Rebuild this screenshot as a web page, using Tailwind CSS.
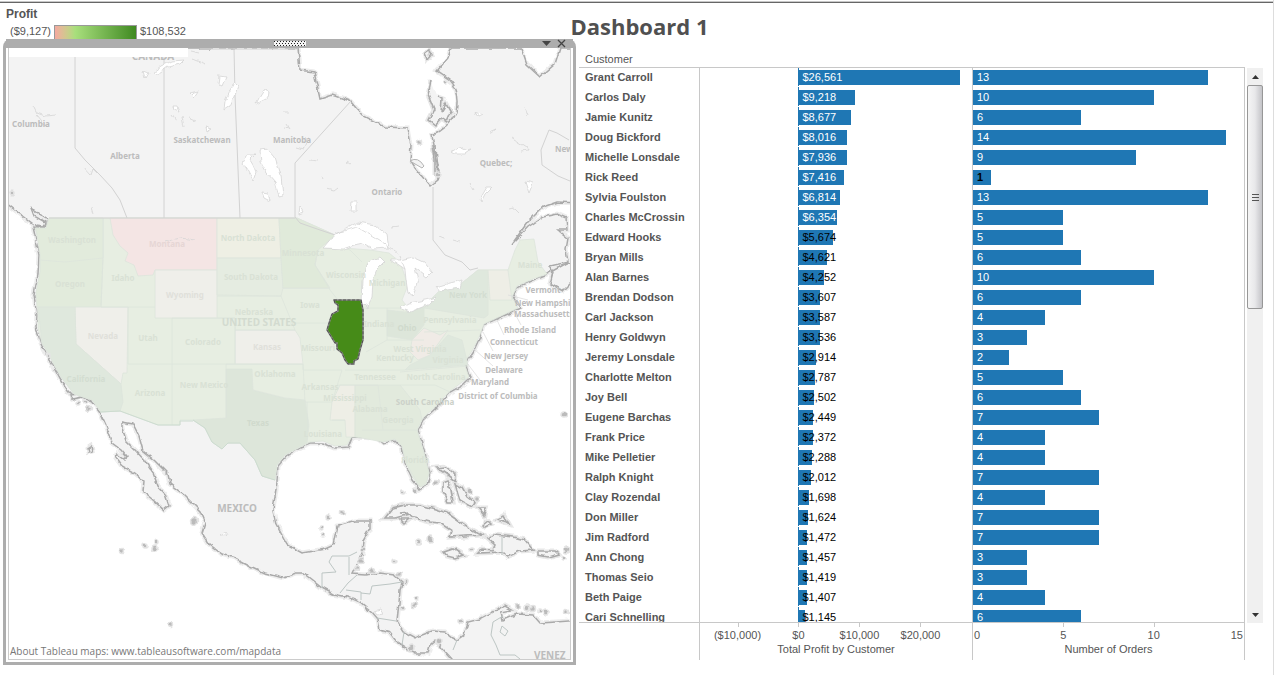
<!DOCTYPE html>
<html lang="en">
<head>
<meta charset="utf-8">
<meta name="viewport" content="width=device-width, initial-scale=1">
<title>Dashboard 1</title>
<script src="https://cdn.jsdelivr.net/npm/@tailwindcss/browser@4"></script>
</head>
<body class="bg-white font-['Liberation_Sans',Arial,sans-serif] text-[11px] leading-4 text-[#555]">
<div class="flex h-screen min-h-96 flex-col border-r border-r-[#ddd]">
  <div class="mt-px h-[2px] shrink-0 border-b border-b-[#666] bg-[#c8c8c8]"></div>

  <header class="grid h-9 shrink-0 grid-cols-[1fr_auto_1fr] pl-[6px]">
    <section aria-label="Profit legend">
      <h2 class="pt-[3px] text-xs leading-4 font-bold">Profit</h2>
      <div class="flex gap-[3px] pl-1">
        <span class="pt-px">($9,127)</span>
        <span class="mt-[3px] h-[14px] w-[83px] border border-b-0 border-[#999] bg-linear-to-r from-[#f4a9a0] via-[#a8df7c] via-25% to-[#3f8a1f]"></span>
        <span class="pt-px">$108,532</span>
      </div>
    </section>
    <h1 class="pt-2 font-['Trebuchet_MS','Open_Sans',sans-serif] text-[22px] leading-[30px] font-bold text-[#505050]">Dashboard 1</h1>
  </header>

  <main class="grid min-h-0 flex-1 grid-cols-[573fr_684fr] gap-[3px] pr-[10px] pb-[10px] pl-[3px]">
    <section aria-label="Profit map" class="flex min-h-0 min-w-0 flex-col rounded-t-lg border-x-[3px] border-b-[3px] border-[#adadad] bg-white">
      <div class="grid h-[9px] shrink-0 grid-cols-[1fr_auto_1fr] items-center bg-[#adadad]">
        <span></span>
        <svg class="h-[5px] w-8" viewBox="0 0 32 5" aria-hidden="true"><defs><pattern id="grip" width="3" height="4" patternUnits="userSpaceOnUse"><rect width="3" height="4" fill="#f4f4f4"/><rect width="1" height="1" fill="#222"/><rect x="2" y="2" width="1" height="1" fill="#222"/></pattern></defs><rect width="32" height="5" fill="url(#grip)"/></svg>
        <div class="flex items-center justify-end gap-[6px] pr-[7px]">
          <button type="button" aria-label="Map menu"><svg class="block h-[9px] w-[9px]" viewBox="0 0 9 9"><path d="M0 2H9L4.500 7Z" fill="#444"/></svg></button>
          <button type="button" aria-label="Close map"><svg class="block h-[9px] w-[9px]" viewBox="0 0 9 9"><path d="M1 1L8 8M8 1L1 8" stroke="#444" stroke-width="1.300"/></svg></button>
        </div>
      </div>
      <div class="mx-[2px] mb-[2px] min-h-0 flex-1 border-x border-b border-[#ccc]">
<svg class="block h-full w-full font-['Noto_Sans','Open_Sans',sans-serif]" viewBox="9 48 561 611" preserveAspectRatio="xMidYMid slice" role="img" aria-label="Map of North America with Illinois highlighted">
<defs>
<filter id="rough" x="-5%" y="-5%" width="110%" height="110%"><feTurbulence type="fractalNoise" baseFrequency="0.13" numOctaves="2" seed="4"/><feDisplacementMap in="SourceGraphic" scale="5" xChannelSelector="R" yChannelSelector="G"/><feGaussianBlur stdDeviation="0.35"/></filter>
<path id="land" d="M0 48H298L300 70L314 72L320 99L333 95L350 101L362 115L385 127L408 128L411 145L410 160L415 168L430 186L438 180L440 175L436 155L432 135Q450 128 457 112Q461 92 450 80L437 71L448 58L451 48H521L527 65L540 77L555 64L560 48H580V203L557 202L543 207L527 223L512 244L528 227L543 217L557 214L566 218L567 230L558 230L568 238L566 250L568 262L550 266L553 272L550 284L563 291L576 278L580 262L567 263L547 274L533 280L517 287L513 297L520 308L510 313L483 325L480 337L473 352L465 363L470 378L463 385L450 392L437 407L423 420L418 430L425 453L430 473L427 485L420 489L413 480L405 463L402 447L395 440L383 443L377 438L352 437L348 447L335 448L323 443L310 443L300 447L285 457L278 465L277 482L273 510L276 525L287 545L302 553L325 549L334 545L338 526L355 521L370 521L370 528L363 540L362 553L358 562L352 574L365 575L380 573L394 575L402 582L400 590L399 603L397 621L404 632L415 638L432 631L445 632L453 638L457 640L464 635L468 622L480 619L495 611L505 606L512 610L501 612L503 620L517 614L533 615L540 623L556 622L580 620V670H460L452 659L442 648L436 640L430 645L428 653L415 653L410 650L396 641L390 633L380 630L378 619L372 612L360 602L348 597L333 594L322 588L312 580L303 573L297 573L283 578L265 573L250 566L235 558L222 554L209 544L202 533L205 523L200 511L184 495L170 484L168 474L155 461L143 451L139 436L133 424L122 422L122 428L126 441L136 451L144 460L153 473L158 486L165 494L169 506L164 510L153 500L143 492L144 481L135 473L122 466L116 458L117 454L124 459L127 457L120 449L112 443L111 439L106 425L100 412L92 401L82 397L72 395L68 391L60 378L54 367L47 355L41 343L36 328L37 315L34 295L38 275L39 255L36 240L33 227L45 228L49 220L42 216L38 212L32 208L35 216L46 222L44 227L36 226L20 214L6 203H0Z"/>
<path id="isles" d="M385 518L393 508L405 505H420L435 509L447 513L467 527L482 535L465 536L450 537L452 531L440 523L430 522L415 518L408 512L400 513L410 514L395 518ZM487 538L495 535L513 537L525 540L533 550L520 551L507 557L502 552L478 553L482 549L493 550L495 545ZM444 552L453 549L463 555L455 558L447 556ZM538 551H555L558 554L548 557L538 555ZM400 519L409 519L404 523ZM485 527L491 524L488 521L483 525ZM437 468L446 467L456 475L455 481L446 474ZM443 482L448 480L451 490L453 502L448 502L443 492ZM455 484L462 488L467 497L475 503L472 507L460 500ZM478 508L486 508L484 515ZM497 520L504 516L508 523ZM88 448L91 446L92 451L89 452ZM70 395L80 394L82 397L73 399ZM425 54L429 51L431 54L427 59ZM431 80L428 95L434 110L429 120L435 125L441 118L447 122L451 113L446 104L441 112L442 98L437 96M433 145L435 160V175M436 146L438 180"/>
</defs>
<rect width="580" height="670" fill="#fff"/>
<g filter="url(#rough)">
<use href="#land" fill="none" stroke="#ededed" stroke-width="5"/><use href="#isles" fill="none" stroke="#e8e8e8" stroke-width="5"/>
<use href="#land" fill="#f3f3f3" stroke="#aaa" stroke-width="1.500"/><use href="#isles" fill="#f3f3f3" stroke="#aaa" stroke-width="1.600"/>
</g>
<!-- Contiguous states: a common tint, then the states that differ from it -->
<g stroke="#dde4dc" stroke-width=".8">
<path fill="#e7eee2" d="M49 218H297L335 235L324 248L343 248L370 250L389 253L400 262L408 285L402 300L410 310L437 299L462 283L478 270H508L515 250L520 240L534 239L538 262L547 274L533 279L517 286L512 297L518 308L484 324L479 337L472 351L464 363L469 377L450 391L436 406L422 419L417 430L424 453L429 473L426 484L420 487L413 478L406 463L402 446L395 439L383 442L377 437L352 436L347 445L335 446L323 441L310 442L285 455L277 465L275 480L262 476L255 460L240 443L228 443L222 449L212 442L205 428L193 420H180V425H158L120 411L101 412L92 400L74 394L61 377L49 355L42 343L38 328L38 315L36 295L40 275L41 255L38 240L35 228L46 229Z"/>
<path fill="#e2ebdc" d="M103 218V258L101 307H37L36 292L40 272L40 255L36 228L46 228L49 218Z"/>
<path fill="#f4e5e4" d="M110 218H217V270H155L153 275L138 276L134 265L125 261L128 253L120 246L113 235Z"/>
<path fill="#efefea" d="M155 270H217V318H155ZM75 307H128L127 373H123L121 384L76 344ZM235 330H295L300 338L303 364H235Z"/>
<path fill="#eeefe4" d="M217 218H279L281 258H217Z"/>
<path fill="#e5ece1" d="M217 258H281L283 288L281 296L217 295Z"/>
<path fill="#dfe8dd" d="M38 307H75L76 344L121 384L123 402L120 411L101 412L92 400L74 394L61 377L42 343Z"/>
<path fill="#dde6da" d="M226 369H252L253 390L285 398L305 400L309 425L307 443L285 455L277 465L275 480L262 476L255 460L240 443L228 443L222 449L212 442L205 428L193 420L226 418ZM387 310L405 312L424 305V325L412 340L387 336Z"/>
<path fill="#e0eada" d="M279 218H297L335 235L318 250L315 265L330 288H283L281 258Z"/>
<path fill="#dfe8dd" d="M430 300L440 290L462 283L478 270H488V315L484 318L424 308ZM410 365L430 355L448 335L462 340L468 365L405 370Z"/>
<path fill="#eeeee6" d="M488 270H508L512 300L490 300ZM340 385H355V437H346L345 420H330L332 402Z"/>
<path fill="#f0ebe6" d="M412 340L424 328L440 335L448 330L430 355L418 360L410 352Z"/>
<path fill="#e2eadd" d="M355 385H400L420 410L422 420L417 430L424 453L429 473L426 484L420 487L406 463L402 446L395 439L383 442L362 438L355 437Z"/>
<path fill="none" d="M40 260L65 262L103 258M101 307L103 258V218M101 307H155M128 307V364H235V318H172V425M226 364V418M226 364H303M217 318H235V330H295L281 296H217M283 288H330M290 323H328M303 364V370H342L332 402H305L303 364M307 402V440M332 420H345M338 385H378L383 430M362 430H418M345 370H405M400 372L468 366M400 385H435L450 392M364 308H424M366 352L387 340H424M387 308V340M424 332L480 330M335 245L350 250L362 262M318 250L315 265L330 290L338 300"/>
</g>
<!-- Provinces and national borders -->
<g fill="none" stroke="#d2d2d2" stroke-width="1">
<path d="M75 57V148L85 160L100 175L112 188L120 200L127 218M164 57V218M234 48L235 95L240 218M351 101L295 163V217L300 223L320 230L335 235M200 49H298M433 187V240L445 255L462 262L470 270L478 268M49 218H295M570 181L558 176L542 165L541 150L549 130L557 133L569 140"/>
<path stroke="#cddcd0" d="M193 420L205 428L212 442L222 449L228 443L240 443L255 460L262 476L275 480M100 412L120 411L158 425H180V421H193"/>
<path stroke="#bdc6c4" d="M322 588V573L336 572L329 562L332 556H349L357 552M349 557V575M340 593L348 583L357 575M346 590L361 592V600M361 593L370 594L372 586L390 584L402 582M377 618L396 621M404 632L402 645M457 640L453 650M503 616L493 622L491 635L496 645L500 655L515 655L520 659M502 537V555M502 626L508 631L505 636L500 632Z"/>
</g>
<!-- Lakes and rivers -->
<g fill="#fff" stroke="#d4d4d4" stroke-width=".8" filter="url(#rough)">
<path d="M324 248L335 235L346 229L358 222L375 225L387 235L389 248L373 249L363 243L354 245L343 249ZM380 257L367 263L362 280L361 303L368 308L372 297L373 280L377 270L385 262ZM390 260L400 260L413 257L424 262L432 272L427 277L415 268L418 280L413 297L408 293L406 280L405 270ZM400 308L408 303L425 300L437 297L430 304L410 312ZM437 287L450 283L462 280L460 288L440 291Z"/>
<path d="M260 150L268 149L275 157L281 176L283 195L279 196L275 182L267 173L261 162ZM247 155L255 155L250 160L253 165L256 172L253 181L248 171L243 163ZM262 192L268 193L270 201L264 198ZM234 83L238 87L230 106L224 110L225 102ZM219 76L226 77L222 86L218 84ZM264 90L269 92L268 98L256 104L259 98ZM190 93L198 91L194 97ZM153 73L162 66L172 61L184 60L180 64L168 67L158 74ZM143 71L148 73L145 78ZM173 106L177 106L179 111L174 109ZM206 127L212 129L207 132ZM351 202L357 202V211L350 211ZM451 152L459 147L466 150L472 149L465 154L454 154ZM480 199L487 187L492 187L485 194L481 202ZM525 181L533 183L529 193ZM475 112L482 115L478 117ZM489 132L496 129L491 133ZM300 206L304 213L299 215ZM374 611L380 609L383 614L377 615ZM220 535L226 532L228 535Z"/>
<path fill="none" d="M33 105L37 113L45 116L56 115M37 115L47 127M83 166L91 175L93 169L97 173M172 114L176 120M182 117L184 127M188 118L195 121M286 124L289 129L284 128M284 112L289 112M92 207L94 214M296 148L303 150L307 138M310 160L318 161M326 189L334 191L338 188M347 162L350 164M322 177L323 179M449 106L454 113M525 107L528 115M512 138L526 147L528 151L521 152M470 183L474 190M510 209L514 208L519 213M440 236L445 238M453 240L460 242M392 227L398 226M193 59L206 64M190 51L199 53M335 234L357 227L387 245L399 255L405 270M195 240L180 238L165 242"/>
</g>
<!-- Small islands -->
<g filter="url(#rough)" fill="#bbb" stroke="#e4e4e4" stroke-width="1.500"><circle cx="122" cy="551" r="2.500"/><circle cx="145" cy="546" r="2"/><circle cx="155" cy="548" r="3"/><circle cx="157" cy="542" r="2"/><circle cx="170" cy="625" r="2.500"/><circle cx="194" cy="521" r="3.500"/><circle cx="328" cy="517" r="2"/><circle cx="343" cy="513" r="2.500"/><circle cx="321" cy="528" r="2"/><circle cx="323" cy="535" r="2"/><circle cx="403" cy="492" r="2"/><circle cx="415" cy="491" r="3"/><circle cx="418" cy="542" r="3"/><circle cx="430" cy="539" r="3"/><circle cx="394" cy="561" r="2"/><circle cx="399" cy="574" r="2.500"/><circle cx="406" cy="582" r="2"/><circle cx="417" cy="598" r="2"/><circle cx="414" cy="605" r="2.500"/><circle cx="461" cy="621" r="2"/><circle cx="518" cy="606" r="2.500"/><circle cx="527" cy="608" r="3"/><circle cx="533" cy="609" r="2.500"/><circle cx="540" cy="611" r="2"/><circle cx="546" cy="612" r="3"/><circle cx="566" cy="612" r="2.500"/><circle cx="567" cy="550" r="3"/><circle cx="564" cy="558" r="2"/><circle cx="564" cy="415" r="3"/><circle cx="78" cy="404" r="2"/><circle cx="85" cy="402" r="2"/><circle cx="89" cy="408" r="2.500"/><circle cx="363" cy="550" r="2"/><circle cx="361" cy="561" r="2.500"/><circle cx="357" cy="568" r="2.500"/><circle cx="372" cy="571" r="2.500"/><circle cx="402" cy="608" r="2"/><circle cx="412" cy="648" r="3"/><circle cx="438" cy="642" r="3"/><circle cx="48" cy="355" r="2"/><circle cx="470" cy="491" r="3"/><circle cx="477" cy="499" r="2.500"/><circle cx="436" cy="482" r="2.500"/><circle cx="472" cy="550" r="2"/><circle cx="445" cy="82" r="2"/><circle cx="420" cy="142" r="2.500"/><circle cx="438" cy="174" r="3"/><circle cx="12" cy="193" r="2"/></g>
<path d="M410 161Q418 156 424 166L422 168Z" fill="#f3f3f3" stroke="#b5b5b5"/>
<!-- Leader lines of the east-coast labels -->
<path fill="none" stroke="#ddd" stroke-width=".8" d="M508 295L528 300M513 310L521 325M497 320L504 335M483 332L493 351M474 349L493 366M467 363L480 380M515 300L519 305"/>
<path d="M334 300H361L363 310V340L360 350L358 359L354 361V364L348 364L345 360L342 353L337 349V343H335L327 330L330 320L332 314L338 311V305L335 303Z" fill="#468b18" stroke="#8a8a8a" stroke-width="1.600"/>
<path d="M334 300H361L363 310V340L360 350L358 359L354 361V364L348 364L345 360L342 353L337 349V343H335L327 330L330 320L332 314L338 311V305L335 303Z" fill="none" stroke="#333" stroke-width=".7" stroke-dasharray="3 1.500"/>
<g font-size="8" font-weight="700" text-anchor="middle" fill="#bcbcbc">
<text x="31" y="127">Columbia</text><text x="125" y="159">Alberta</text><text x="202" y="143">Saskatchewan</text><text x="292" y="143">Manitoba</text><text x="387" y="195">Ontario</text><text x="496" y="166">Quebec;</text><text x="555" y="152" text-anchor="start">New</text>
<text x="153" y="60" font-size="10">CANADA</text><text x="237" y="512" font-size="10">MEXICO</text><text x="534" y="659" font-size="10" text-anchor="start">VENEZ</text>
<text x="543" y="293">Vermont</text><text x="515" y="306" text-anchor="start">New Hampshire</text><text x="514" y="317" text-anchor="start">Massachusetts</text><text x="530" y="333">Rhode Island</text><text x="514" y="345">Connecticut</text><text x="506" y="359">New Jersey</text><text x="504" y="373">Delaware</text><text x="490" y="385">Maryland</text><text x="498" y="399">District of Columbia</text>
</g>
<g font-size="8" font-weight="700" text-anchor="middle" fill="#d9e1d5">
<text x="72" y="243">Washington</text><text x="70" y="287">Oregon</text><text x="123" y="281">Idaho</text><text x="167" y="247" fill="#e6d6d5">Montana</text><text x="248" y="241">North Dakota</text><text x="251" y="280">South Dakota</text><text x="185" y="298" fill="#e0e0da">Wyoming</text><text x="254" y="315">Nebraska</text><text x="259" y="326" font-size="10" fill="#d3dbd0">UNITED STATES</text><text x="103" y="339" fill="#e0e0da">Nevada</text><text x="148" y="341">Utah</text><text x="203" y="345">Colorado</text><text x="267" y="350" fill="#e0e0da">Kansas</text><text x="86" y="382" fill="#d3ddd1">California</text><text x="150" y="396">Arizona</text><text x="204" y="388">New Mexico</text><text x="275" y="377">Oklahoma</text><text x="258" y="426" fill="#d0dacd">Texas</text><text x="303" y="256">Minnesota</text><text x="346" y="278">Wisconsin</text><text x="387" y="286">Michigan</text><text x="310" y="308">Iowa</text><text x="318" y="351">Missouri</text><text x="320" y="390">Arkansas</text><text x="345" y="401">Mississippi</text><text x="370" y="412">Alabama</text><text x="398" y="423">Georgia</text><text x="323" y="437">Louisiana</text><text x="379" y="327">Indiana</text><text x="407" y="331" fill="#d0dacd">Ohio</text><text x="450" y="323">Pennsylvania</text><text x="468" y="298" fill="#d3ddd1">New York</text><text x="420" y="352">West Virginia</text><text x="395" y="361">Kentucky</text><text x="448" y="363">Virginia</text><text x="375" y="380">Tennessee</text><text x="436" y="380">North Carolina</text><text x="425" y="405" fill="#ccd1c9">South Carolina</text><text x="415" y="463">Florida</text><text x="530" y="268">Maine</text>
</g>
<path d="M8 48H188V57H8Z" fill="#fff"/>
<text x="10" y="655" font-size="10" class="font-['Open_Sans',sans-serif]" fill="#777">About Tableau maps: www.tableausoftware.com/mapdata</text>
</svg>
      </div>
    </section>

    <section aria-label="Customer charts" class="grid min-h-0 min-w-0 grid-cols-[1fr_16px] grid-rows-[29px_1fr_42px] gap-x-[2px]">
      <div class="row-span-2 row-start-1 min-h-0 overflow-hidden border-b border-[#c8c8c8]">
        <table class="w-full table-fixed border-separate border-spacing-0 text-left">
          <colgroup><col class="w-[120px]"><col><col></colgroup>
          <thead>
            <tr><th scope="col" class="h-[29px] border-b border-[#c8c8c8] pt-3 pl-[6px] font-normal">Customer</th><th scope="col" class="border-b border-[#c8c8c8]"><span class="sr-only">Total Profit by Customer</span></th><th scope="col" class="border-b border-[#c8c8c8]"><span class="sr-only">Number of Orders</span></th></tr>
          </thead>
          <tbody id="rows"></tbody>
        </table>
      </div>
      <div class="col-start-2 row-start-2 flex flex-col bg-[#f0f0f0]">
        <button type="button" aria-label="Scroll up" class="flex h-[17px] shrink-0 items-center justify-center"><svg class="h-1 w-[7px]" viewBox="0 0 7 4"><path d="M0 4L3.500 0L7 4Z" fill="#333"/></svg></button>
        <div class="flex h-56 shrink-0 flex-col items-center justify-center gap-[2px] rounded-xs border border-[#979797] bg-linear-to-r from-[#f5f5f5] via-[#e8e8ea] to-[#c4c4c8]">
          <span class="h-px w-[7px] bg-[#555]"></span><span class="h-px w-[7px] bg-[#555]"></span><span class="h-px w-[7px] bg-[#555]"></span>
        </div>
        <span class="flex-1"></span>
        <button type="button" aria-label="Scroll down" class="flex h-[17px] shrink-0 items-center justify-center"><svg class="h-1 w-[7px]" viewBox="0 0 7 4"><path d="M0 0H7L3.500 4Z" fill="#333"/></svg></button>
      </div>
      <div class="row-start-3 grid grid-cols-[120px_1fr_1fr] pb-[5px]">
        <span></span>
        <div class="relative border-l border-[#c8c8c8] pt-[18px] text-center" id="profitAxis">Total Profit by Customer</div>
        <div class="relative border-x border-[#c8c8c8] pt-[18px] text-center" id="ordersAxis">Number of Orders</div>
      </div>
    </section>
  </main>
</div>
<script>
const customers = [
  ["Grant Carroll",26561,13],["Carlos Daly",9218,10],["Jamie Kunitz",8677,6],["Doug Bickford",8016,14],
  ["Michelle Lonsdale",7936,9],["Rick Reed",7416,1],["Sylvia Foulston",6814,13],["Charles McCrossin",6354,5],
  ["Edward Hooks",5674,5],["Bryan Mills",4621,6],["Alan Barnes",4252,10],["Brendan Dodson",3607,6],
  ["Carl Jackson",3587,4],["Henry Goldwyn",3536,3],["Jeremy Lonsdale",2914,2],["Charlotte Melton",2787,5],
  ["Joy Bell",2502,6],["Eugene Barchas",2449,7],["Frank Price",2372,4],["Mike Pelletier",2288,4],
  ["Ralph Knight",2012,7],["Clay Rozendal",1698,4],["Don Miller",1624,7],["Jim Radford",1472,7],
  ["Ann Chong",1457,3],["Thomas Seio",1419,3],["Beth Paige",1407,4],["Cari Schnelling",1145,6]
];
const profitMin = -16150, profitSpan = 44600, ordersMax = 15;
const profitX = v => (v - profitMin) / profitSpan * 100;
const ordersX = v => v / ordersMax * 100;

document.getElementById("rows").innerHTML = customers.map(([name, profit, orders]) => `
  <tr>
    <th scope="row" class="h-5 p-0 pb-[2px] pl-[6px] font-bold whitespace-nowrap">${name}</th>
    <td class="h-5 border-l border-[#c8c8c8] p-0">
      <div class="relative h-5">
        <i class="absolute inset-y-0 border-l border-dotted border-[#1f77b4]" style="left:${profitX(0)}%"></i>
        <i class="absolute top-[2px] h-[15px] bg-[#1f77b4]" style="left:${profitX(0)}%;width:${profit / profitSpan * 100}%"></i>
        <span class="absolute top-px pl-1 ${profit > 6000 ? "text-white" : "text-black"}" style="left:${profitX(0)}%">$${profit.toLocaleString("en-US")}</span>
      </div>
    </td>
    <td class="h-5 border-x border-[#c8c8c8] p-0">
      <div class="relative h-5">
        <i class="absolute top-[2px] left-0 h-[15px] bg-[#1f77b4]" style="width:${ordersX(orders)}%"></i>
        <span class="absolute top-px left-1 ${orders > 1 ? "text-white" : "font-bold text-black"}">${orders}</span>
      </div>
    </td>
  </tr>`).join("");

const tick = (x, text) => `
  <i class="absolute top-0 h-1 border-l border-[#c8c8c8]" style="left:${x}%"></i>
  <span class="absolute top-1 -translate-x-1/2" style="left:${x}%">${text}</span>`;
document.getElementById("profitAxis").insertAdjacentHTML("beforeend",
  [[-10000, "($10,000)"], [0, "$0"], [10000, "$10,000"], [20000, "$20,000"]].map(([v, t]) => tick(profitX(v), t)).join(""));
document.getElementById("ordersAxis").insertAdjacentHTML("beforeend",
  `<span class="absolute top-1 left-px">0</span>` + [5, 10].map(v => tick(ordersX(v), v)).join("") + `<span class="absolute top-1 right-px">15</span>`);
</script>
</body>
</html>
